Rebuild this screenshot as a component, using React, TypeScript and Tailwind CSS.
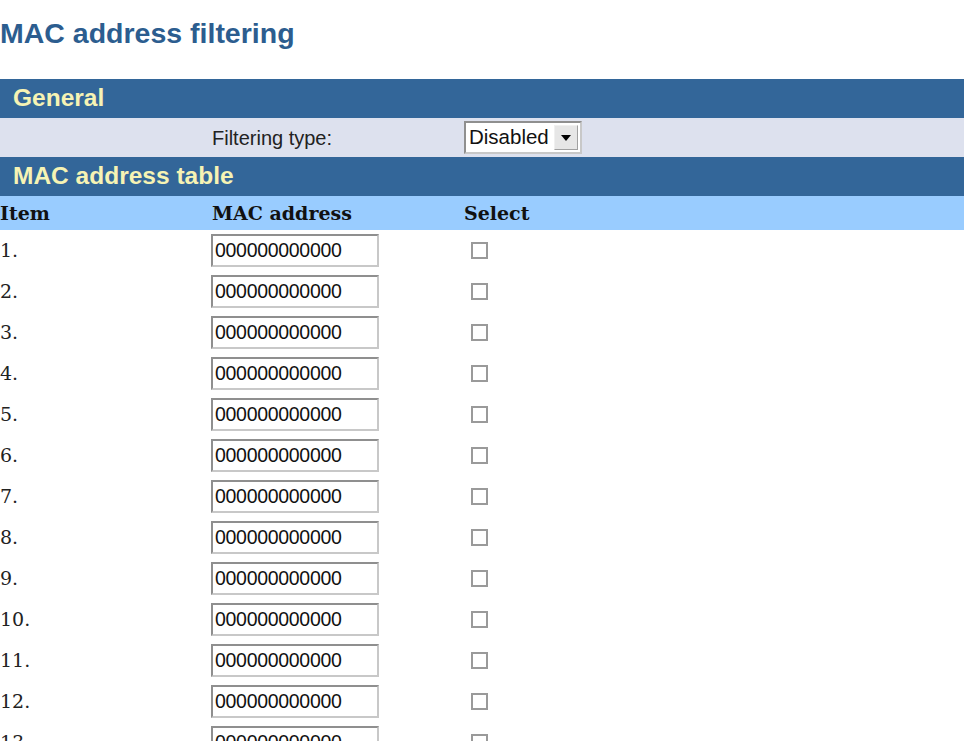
const rows = Array.from({ length: 13 }, (_, i) => i + 1);

function MacInput() {
  return (
    <div className="flex h-[33px] w-[168px] items-center border-2 border-[#8f8f8f] border-r-[#c8c8c8] border-b-[#c8c8c8] bg-white pl-[2px] font-['Liberation_Sans',Arial,sans-serif] text-[19.5px] leading-none tracking-[-0.3px] text-[#111]">
      000000000000
    </div>
  );
}

function Checkbox() {
  return <div className="ml-[7px] h-[17px] w-[17px] border-2 border-[#9a9a9a] bg-white" />;
}

export default function App() {
  return (
    <div className="min-h-[741px] w-[964px] overflow-hidden bg-white font-['Liberation_Sans',Arial,sans-serif]">
      <h1 className="h-[79px] pt-[17px] text-[28.5px] font-bold leading-[32px] text-[#2c5d8f]">
        MAC address filtering
      </h1>

      <div className="flex h-[39px] items-center bg-[#336699] pl-[13px] text-[24.5px] font-bold text-[#f6f3b4]">
        General
      </div>

      <div className="grid h-[39px] grid-cols-[212px_252px_1fr] items-center bg-[#dde1ee] text-[20px] text-[#222]">
        <div />
        <div>Filtering type:</div>
        <div className="flex h-[33px] w-[118px] items-stretch border-2 border-[#8f8f8f] border-r-[#c8c8c8] border-b-[#c8c8c8] bg-white">
          <div className="flex flex-1 items-center pl-[3px] text-[20.5px] text-[#111]">Disabled</div>
          <div className="my-[2px] mr-[2px] flex w-[24px] items-center justify-center border border-[#f0f0f0] border-r-[#a0a0a0] border-b-[#a0a0a0] bg-[#e6e6e6]">
            <svg width="10" height="6" viewBox="0 0 10 6">
              <path d="M0 0 H10 L5 6 Z" fill="#000" />
            </svg>
          </div>
        </div>
      </div>

      <div className="flex h-[39px] items-center bg-[#336699] pl-[13px] text-[24.5px] font-bold text-[#f6f3b4]">
        MAC address table
      </div>

      <div className="grid h-[34px] grid-cols-[212px_252px_1fr] items-center bg-[#99ccff] font-['DejaVu_Serif','Liberation_Serif',serif] text-[19px] font-bold text-[#111]">
        <div>Item</div>
        <div>MAC address</div>
        <div>Select</div>
      </div>

      {rows.map((n) => (
        <div
          key={n}
          className="grid h-[41px] grid-cols-[211px_253px_1fr] items-center font-['DejaVu_Serif','Liberation_Serif',serif] text-[19px] text-[#222]"
        >
          <div>{n}.</div>
          <MacInput />
          <Checkbox />
        </div>
      ))}
    </div>
  );
}
